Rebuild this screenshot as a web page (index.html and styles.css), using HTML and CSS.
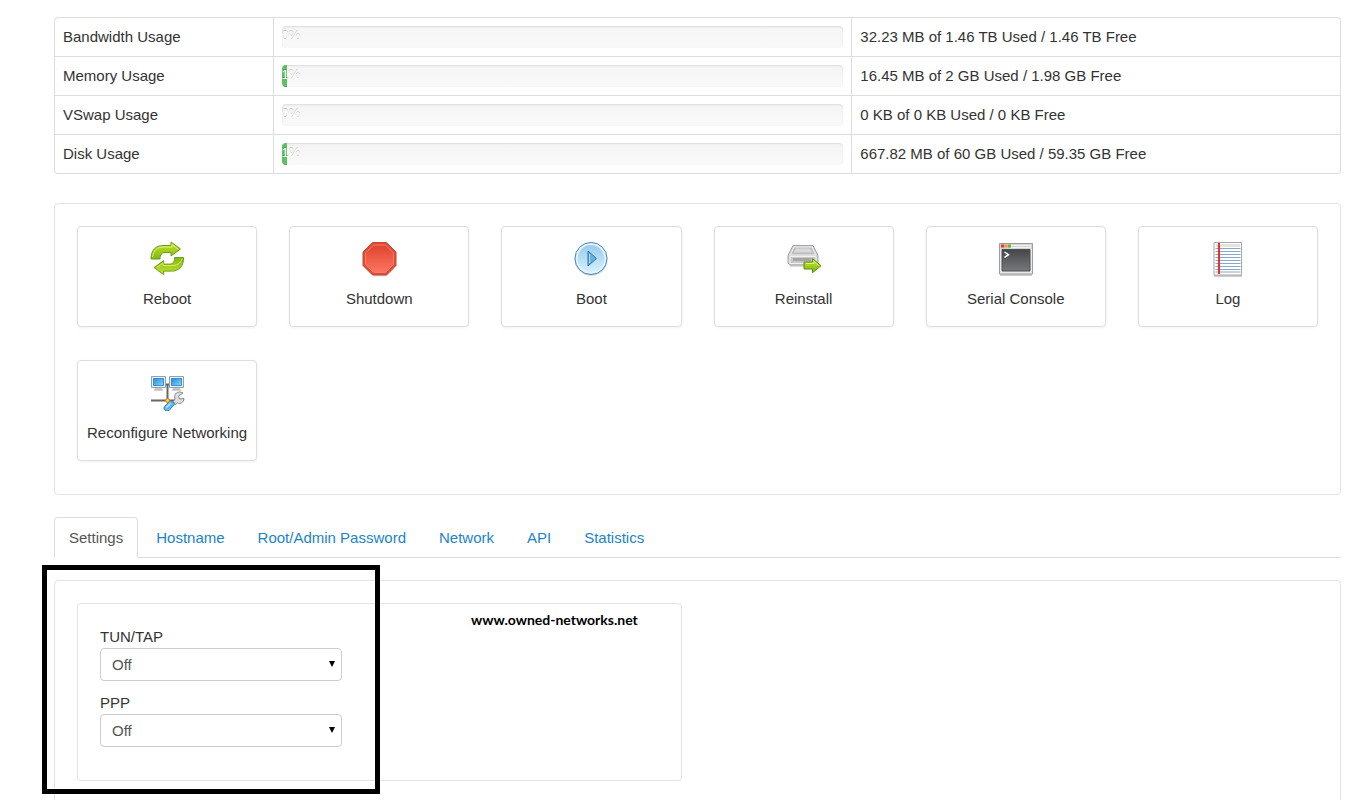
FILE: index.html
```html
<!DOCTYPE html>
<html lang="en">
<head>
    <meta charset="UTF-8">
    <meta name="viewport" content="width=device-width, initial-scale=1.0">
    <title>Virtual Server</title>
    <link rel="stylesheet" href="styles.css">
</head>
<body>
    <div class="container">
        <table class="usage">
            <tr>
                <th scope="row">Bandwidth Usage</th>
                <td><div class="progress"><div class="bar" style="width: 0%">0%</div></div></td>
                <td>32.23 MB of 1.46 TB Used / 1.46 TB Free</td>
            </tr>
            <tr>
                <th scope="row">Memory Usage</th>
                <td><div class="progress"><div class="bar" style="width: 1%">1%</div></div></td>
                <td>16.45 MB of 2 GB Used / 1.98 GB Free</td>
            </tr>
            <tr>
                <th scope="row">VSwap Usage</th>
                <td><div class="progress"><div class="bar" style="width: 0%">0%</div></div></td>
                <td>0 KB of 0 KB Used / 0 KB Free</td>
            </tr>
            <tr>
                <th scope="row">Disk Usage</th>
                <td><div class="progress"><div class="bar" style="width: 1%">1%</div></div></td>
                <td>667.82 MB of 60 GB Used / 59.35 GB Free</td>
            </tr>
        </table>

        <div class="well actions">
            <button type="button" class="action">
                <svg viewBox="0 0 36 36">
                    <defs>
                        <linearGradient id="green" x1="0" y1="0" x2="0" y2="1">
                            <stop offset="0" stop-color="#c4e52c"/>
                            <stop offset="1" stop-color="#83b810"/>
                        </linearGradient>
                        <path id="turn" d="M2 18C2 9 7 4.500 14 4.500h8V1l9.500 7-9.500 7v-3.500h-6c-3 0-5 2-5 6.500z"/>
                    </defs>
                    <g fill="url(#green)" stroke="#6a9c18" stroke-linejoin="round">
                        <use href="#turn"/>
                        <use href="#turn" transform="rotate(180 18.300 17.300)"/>
                    </g>
                    <path d="M3.500 16c1-7 5-10 10.500-10h9V3.500l6 4.500" fill="none" stroke="#e0f27c"/>
                    <path d="M8 26.500l6-4.500v2.500h8c6 0 10-2 11-7" fill="none" stroke="#d8ee6a"/>
                </svg>
                <span>Reboot</span>
            </button>
            <button type="button" class="action">
                <svg viewBox="0 0 36 36">
                    <defs>
                        <linearGradient id="red" x1="0" y1="0" x2="0" y2="1">
                            <stop offset="0" stop-color="#e0442f"/>
                            <stop offset="1" stop-color="#fb7560"/>
                        </linearGradient>
                    </defs>
                    <path d="M12 34.500h13l8-7" fill="none" stroke="#ddd" stroke-width="2"/>
                    <path d="M11.500 1.500h14l9.500 9.500v13.500l-9.500 9.500h-14l-9.500-9.500V11z" fill="#df4a37" stroke="#c84838"/>
                    <path d="M12.500 4h12l8 8v11.500l-8 8h-12l-8-8V12z" fill="url(#red)" stroke="#f27d6b"/>
                </svg>
                <span>Shutdown</span>
            </button>
            <button type="button" class="action">
                <svg viewBox="0 0 36 36">
                    <defs>
                        <linearGradient id="blue" x1="0" y1="0" x2="0" y2="1">
                            <stop offset="0" stop-color="#9bcbed"/>
                            <stop offset="1" stop-color="#d4effd"/>
                        </linearGradient>
                    </defs>
                    <circle cx="18" cy="18.500" r="16.500" fill="#ddd"/>
                    <circle cx="18" cy="17.500" r="16" fill="#e4f5fd" stroke="#4384b8"/>
                    <circle cx="18" cy="17.500" r="13.500" fill="url(#blue)"/>
                    <path d="M15 10l8.500 7.500L15 25z" fill="#69b1e0" stroke="#2b70a8" stroke-linejoin="round"/>
                    <path d="M16.500 13v9" stroke="#a9dcf5"/>
                </svg>
                <span>Boot</span>
            </button>
            <button type="button" class="action">
                <svg viewBox="0 0 36 36">
                    <path d="M4 25h17" stroke="#ddd" stroke-width="2"/>
                    <path d="M7 4.500h20l5 10V22l-2 2H4l-2-2v-7.500z" fill="#d3d3d5" stroke="#a2a2a5" stroke-linejoin="round"/>
                    <path d="M8 6h18l3.500 8h-25z" fill="#bdbdc1" stroke="#eee"/>
                    <path d="M10 7.500h14l2 4H8z" fill="#d9d9dc"/>
                    <path d="M4 15.500h26v7H4z" fill="#c7c7ca" stroke="#f1f1f1"/>
                    <path d="M7 18.500h18" stroke="#a5a5a9" stroke-width="3"/>
                    <path d="M18 21h8.500v-3.500l8.500 7.200-8.500 7v-3.700H18z" fill="url(#green)" stroke="#5c8d10" stroke-linejoin="round"/>
                    <path d="M20 22.500h8v-2l4.500 4" fill="none" stroke="#e0f47f"/>
                </svg>
                <span>Reinstall</span>
            </button>
            <button type="button" class="action">
                <svg viewBox="0 0 36 36">
                    <defs>
                        <linearGradient id="dark" x1="0" y1="0" x2="0" y2="1">
                            <stop offset="0" stop-color="#44464a"/>
                            <stop offset="1" stop-color="#77797d"/>
                        </linearGradient>
                    </defs>
                    <path d="M2 34h32" stroke="#ccc" stroke-width="2"/>
                    <path d="M1.500 2.500h33v30.500h-33z" fill="#e9e9e9" stroke="#9b9b9b"/>
                    <path d="M2 3h32v5H2z" fill="#d5d5d5"/>
                    <path d="M13 4.500h20M13 6.500h20" stroke="#f1f1f1"/>
                    <path d="M3 3.500h3v3H3z" fill="#e73b2d"/>
                    <path d="M6.500 3.500h3v3h-3z" fill="#f19b2c"/>
                    <path d="M10 3.500h3v3h-3z" fill="#65b838"/>
                    <path d="M4 8.500h28V30H4z" fill="url(#dark)" stroke="#4c4e50"/>
                    <path d="M6.500 11l4 2.700-4 2.700" fill="none" stroke="#fff" stroke-width="1.500"/>
                </svg>
                <span>Serial Console</span>
            </button>
            <button type="button" class="action">
                <svg viewBox="0 0 36 36">
                    <path d="M4 35h28" stroke="#ccc" stroke-width="2"/>
                    <path d="M4 1.500h27.500V34H4z" fill="#fff" stroke="#a7a7a7"/>
                    <path d="M6 3h24v3H6z" fill="#e4e4df"/>
                    <path d="M5.500 7.500h25M5.500 10.500h25M5.500 13.500h25M5.500 16.500h25M5.500 19.500h25M5.500 22.500h25M5.500 25.500h25M5.500 28.500h25M5.500 31h25" stroke="#87a9c8"/>
                    <path d="M8 2h2v31H8z" fill="#ee2f27"/>
                </svg>
                <span>Log</span>
            </button>
            <button type="button" class="action">
                <svg viewBox="0 0 36 36">
                    <defs>
                        <linearGradient id="screen" x1="0" y1="0" x2="1" y2="1">
                            <stop offset="0" stop-color="#278bd5"/>
                            <stop offset="1" stop-color="#8ad6fb"/>
                        </linearGradient>
                        <g id="monitor">
                            <path d="M4 12h7v3H4z" fill="#ccc"/>
                            <path d="M3 15h9" stroke="#aaa"/>
                            <path d="M.5 1.500h14v11H.5z" fill="#eaf2f7" stroke="#8fa2b0"/>
                            <path d="M2.500 3.500h10v7h-10z" fill="url(#screen)" stroke="#3a8fce"/>
                        </g>
                    </defs>
                    <path d="M15 9.500h8M18.500 9v16M2 25.500h26" stroke="#666" stroke-width="2" fill="none"/>
                    <use href="#monitor" x="2"/>
                    <use href="#monitor" x="20"/>
                    <path d="M24 27l2-3c-2-5 3-9 8-6l-4.500 3 1 3 4.500-.5c0 4-4 6-6.500 4.500l-2 1.500z" fill="#dedede" stroke="#85888b"/>
                    <path d="M15.500 31.500l6-6 4.500 3-6 7c-3 1.500-6.500-1-4.500-4z" fill="#63baf0" stroke="#267bb5"/>
                    <path d="M17.500 32.500l4-4" stroke="#b9e6ff" stroke-width="1.500"/>
                    <circle cx="18.500" cy="25.500" r="2" fill="#ffd13d" stroke="#d97a1e"/>
                </svg>
                <span>Reconfigure Networking</span>
            </button>
        </div>

        <nav class="tabs">
            <a href="#settings" class="active">Settings</a>
            <a href="#hostname">Hostname</a>
            <a href="#password">Root/Admin Password</a>
            <a href="#network">Network</a>
            <a href="#api">API</a>
            <a href="#statistics">Statistics</a>
        </nav>

        <div class="well settings" id="settings">
            <form class="well options">
                <label for="tuntap">TUN/TAP</label>
                <div class="select">
                    <select id="tuntap">
                        <option>Off</option>
                        <option>On</option>
                    </select>
                </div>
                <label for="ppp">PPP</label>
                <div class="select">
                    <select id="ppp">
                        <option>Off</option>
                        <option>On</option>
                    </select>
                </div>
            </form>
            <div class="highlight"></div>
            <div class="watermark">www.owned-networks.net</div>
        </div>
    </div>
</body>
</html>
```

FILE: styles.css
```css
body {
    margin: 0;
    background-color: #fff;
    color: #333;
    font-family: "Liberation Sans", Arial, sans-serif;
    font-size: 15px;
    line-height: 22px;
}
.container {
    padding: 17px 11px 0 54px;
}
.usage {
    width: 100%;
    table-layout: fixed;
    border: 1px solid #ddd;
    border-left: 0;
    border-spacing: 0;
    border-radius: 4px;
    margin-bottom: 29px;
}
.usage th,
.usage td {
    padding: 8px;
    border-left: 1px solid #ddd;
    text-align: left;
    font-weight: normal;
}
.usage th {
    width: 17%;
    box-sizing: border-box;
}
.usage td:nth-child(2) {
    width: 45%;
    box-sizing: border-box;
}
.usage tr + tr th,
.usage tr + tr td {
    border-top: 1px solid #ddd;
}
.usage tr:first-child th {
    border-top-left-radius: 4px;
}
.usage tr:last-child th {
    border-bottom-left-radius: 4px;
}
.progress {
    height: 22px;
    overflow: hidden;
    border-radius: 4px;
    background-image: linear-gradient(to bottom, #f5f5f5, #f9f9f9);
    box-shadow: inset 0 1px 2px rgba(0,0,0,0.1);
}
.bar {
    height: 22px;
    color: #fff;
    font-size: 13px;
    line-height: 20px;
    text-shadow: 0 -1px 0 rgba(0,0,0,0.25);
    background-color: #5ec162;
    box-shadow: inset 0 -1px 0 rgba(0,0,0,0.15);
}
.well {
    border: 1px solid #e3e3e3;
    border-radius: 4px;
    padding: 22px;
}
.actions {
    display: grid;
    grid-template-columns: repeat(6, 1fr);
    gap: 33px 32px;
    padding-bottom: 33px;
    margin-bottom: 22px;
}
.action {
    display: flex;
    flex-direction: column;
    align-items: center;
    gap: 11px;
    height: 101px;
    min-width: 0;
    padding: 14px 0 0;
    border: 1px solid #ddd;
    border-radius: 4px;
    background-color: #fff;
    box-shadow: 0 1px 3px rgba(0,0,0,0.06);
    color: #333;
    font: inherit;
    white-space: nowrap;
    cursor: pointer;
}
.action:hover {
    border-color: #0088cc;
}
.action svg {
    width: 36px;
    height: 36px;
}
.tabs {
    display: flex;
    gap: 3px;
    border-bottom: 1px solid #ddd;
    margin-bottom: 22px;
}
.tabs a {
    padding: 9px 14px 8px;
    margin-bottom: -1px;
    border: 1px solid transparent;
    border-radius: 4px 4px 0 0;
    color: #1c84c6;
    text-decoration: none;
}
.tabs .active {
    color: #555;
    background-color: #fff;
    border-color: #ddd;
    border-bottom-color: #fff;
}
.settings {
    position: relative;
}
.options {
    box-sizing: border-box;
    width: calc(50% - 16px);
}
.options label {
    display: block;
}
.select {
    position: relative;
    width: 242px;
    margin-bottom: 11px;
}
.select select {
    display: block;
    width: 100%;
    height: 33px;
    padding: 0 11px;
    appearance: none;
    border: 1px solid #ccc;
    border-radius: 4px;
    background-color: #fff;
    color: #555;
    font: inherit;
}
.select::after {
    content: "";
    position: absolute;
    top: 13px;
    right: 7px;
    border: 3px solid transparent;
    border-top: 6px solid #000;
    border-bottom: 0;
    pointer-events: none;
}
.highlight {
    position: absolute;
    top: -16px;
    left: -13px;
    width: 328px;
    height: 219px;
    border: 5px solid #000;
    pointer-events: none;
}
.watermark {
    position: absolute;
    top: 28px;
    left: 416px;
    color: #000;
    font-family: Lato, sans-serif;
    font-size: 14px;
    font-weight: bold;
}
```
